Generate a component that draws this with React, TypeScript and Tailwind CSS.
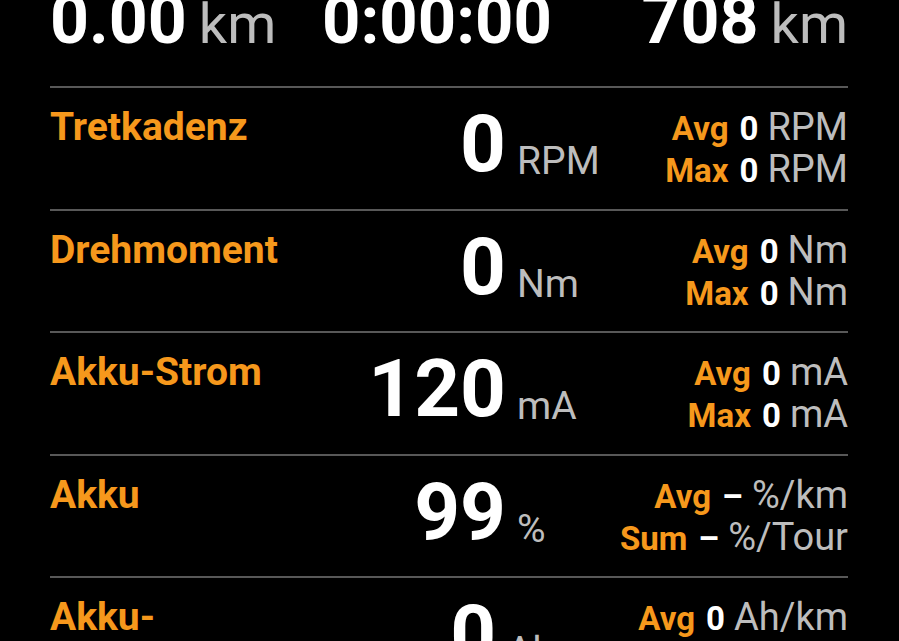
import React from "react";

type Row = {
  label: string;
  value: string;
  unit: string;
  s1: [string, string, string];
  s2: [string, string, string];
};

const rows: Row[] = [
  { label: "Tretkadenz", value: "0", unit: "RPM", s1: ["Avg", "0", "RPM"], s2: ["Max", "0", "RPM"] },
  { label: "Drehmoment", value: "0", unit: "Nm", s1: ["Avg", "0", "Nm"], s2: ["Max", "0", "Nm"] },
  { label: "Akku-Strom", value: "120", unit: "mA", s1: ["Avg", "0", "mA"], s2: ["Max", "0", "mA"] },
  { label: "Akku", value: "99", unit: "%", s1: ["Avg", "–", "%/km"], s2: ["Sum", "–", "%/Tour"] },
  { label: "Akku-Verbrauch", value: "0", unit: "Ah", s1: ["Avg", "0", "Ah/km"], s2: ["Sum", "0", "Ah/Tour"] },
];

function StatLine({ s }: { s: [string, string, string] }) {
  return (
    <div className="flex items-baseline justify-end h-[42px] leading-[42px] text-[38px]">
      <span className="font-bold text-[33px] text-[#f6981c]">{s[0]}</span>
      <span className="font-bold text-[33px] text-white ml-[11px]">{s[1]}</span>
      <span className="text-[38px] text-[#bdbdbd] ml-[9px]">{s[2]}</span>
    </div>
  );
}

function Divider() {
  return <div className="h-[2px] bg-[#585858]" />;
}

export default function App() {
  return (
    <div
      className="w-[899px] h-[641px] overflow-hidden bg-black pl-[50px] pr-[51px]"
      style={{ fontFamily: "Roboto, 'Noto Sans', sans-serif" }}
    >
      {/* Top summary row */}
      <div className="flex items-baseline -mt-[14px] h-[100px] leading-[68px]">
        <div className="flex-1 flex items-baseline">
          <span className="text-[68px] font-bold text-white">0.00</span>
          <span className="text-[56px] text-[#bdbdbd] ml-[12px]">km</span>
        </div>
        <div className="flex-1 flex items-baseline justify-center pr-[24px]">
          <span className="text-[67px] font-bold text-white">0:00:00</span>
        </div>
        <div className="flex-1 flex items-baseline justify-end">
          <span className="text-[68px] font-bold text-white">708</span>
          <span className="text-[56px] text-[#bdbdbd] ml-[12px]">km</span>
        </div>
      </div>

      {rows.map((r) => (
        <div key={r.label}>
          <Divider />
          <div className="flex h-[120.5px]">
            <div className="w-[240px] pt-[19px] text-[39px] leading-[40px] font-bold text-[#f6981c]">
              {r.label}
            </div>
            <div className="w-[216px] pt-[16px] text-right text-[80px] leading-[80px] font-bold text-white">
              {r.value}
            </div>
            <div className="w-[110px] pt-[53px] pl-[11px] text-[39px] leading-[40px] text-[#bdbdbd]">
              {r.unit}
            </div>
            <div className="flex-1 pt-[18px]">
              <StatLine s={r.s1} />
              <StatLine s={r.s2} />
            </div>
          </div>
        </div>
      ))}
    </div>
  );
}
